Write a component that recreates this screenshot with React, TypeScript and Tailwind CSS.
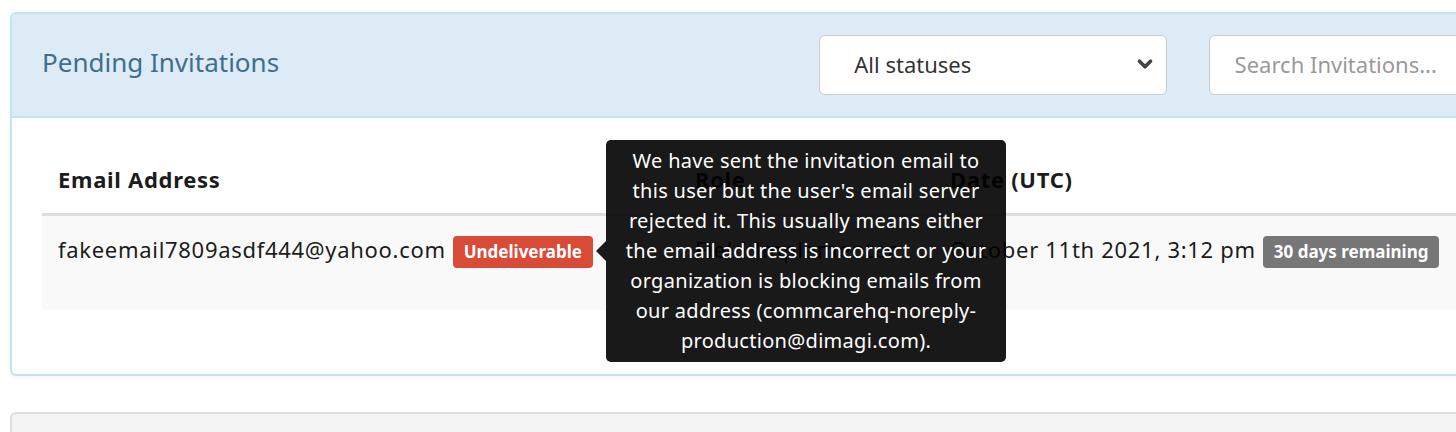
import { ChevronDown } from "lucide-react";

const FONT = { fontFamily: '"Noto Sans", "Open Sans", sans-serif' };

const TIP_LINES = [
  "We have sent the invitation email to",
  "this user but the user's email server",
  "rejected it. This usually means either",
  "the email address is incorrect or your",
  "organization is blocking emails from",
  "our address (commcarehq-noreply-",
  "production@dimagi.com).",
];

function Tooltip() {
  return (
    <div className="absolute left-[554px] top-[-76px] z-10 flex items-center">
      <div className="h-0 w-0 border-y-[10px] border-r-[10px] border-y-transparent border-r-black/90" />
      <div className="w-[400px] rounded-[5px] bg-black/90 py-[6px] text-center text-[20px] font-normal leading-[30px] tracking-[0.3px] text-white">
        {TIP_LINES.map((l) => (
          <div key={l} className="whitespace-nowrap">
            {l}
          </div>
        ))}
      </div>
    </div>
  );
}

export default function App() {
  return (
    <div className="h-[432px] w-[1456px] overflow-hidden bg-white pt-3 pl-[10px]" style={FONT}>
      {/* Pending invitations panel */}
      <div className="w-[1500px] rounded-[6px] border-2 border-[#c3e4ef] bg-white shadow-[0_2px_4px_rgba(0,0,0,0.04)]">
        <div className="flex h-[104px] items-center rounded-t-[4px] border-b-2 border-[#c3e4ef] bg-[#dcebf6] pl-[30px]">
          <h2 className="w-[779px] pb-[6px] text-[26px] font-normal text-[#3f6e8f]">Pending Invitations</h2>
          <div className="flex h-[60px] w-[348px] items-center justify-between rounded-[6px] border border-[#cccccc] bg-white pb-[2px] pl-[34px] pr-[10px] text-[22px] text-[#333]">
            <span>All statuses</span>
            <ChevronDown size={22} strokeWidth={4} className="text-[#444]" />
          </div>
          <div className="ml-[42px] flex h-[60px] w-[300px] items-center rounded-[6px] border border-[#cccccc] bg-white pb-[2px] pl-[25px] text-[22px] text-[#999]">
            Search Invitations...
          </div>
        </div>

        <div className="pl-[30px] pt-[31px] pb-[64px]">
          <table className="w-[1440px] border-collapse text-left text-[22px] tracking-[0.7px] text-[#1c1c1c]">
            <thead>
              <tr className="border-b-[3px] border-[#dddddd]">
                <th className="w-[637px] px-4 pt-[14px] pb-[18px] font-bold leading-8">Email Address</th>
                <th className="w-[255px] px-4 pt-[14px] pb-[18px] font-bold leading-8">Role</th>
                <th className="px-4 pt-[14px] pb-[18px] font-bold leading-8">Date (UTC)</th>
              </tr>
            </thead>
            <tbody>
              <tr className="h-[95px] bg-[#f9f9f9]">
                <td className="relative px-4 pt-[17px] align-top leading-8">
                  <span>fakeemail7809asdf444@yahoo.com</span>
                  <span className="ml-[7px] inline-block rounded-[4px] bg-[#d84b37] px-[11px] align-[0px] text-[17px] font-bold leading-[32px] tracking-normal text-white">
                    Undeliverable
                  </span>
                  <Tooltip />
                </td>
                <td className="px-4 pt-[17px] align-top leading-8">Field Implementer</td>
                <td className="whitespace-nowrap px-4 pt-[17px] align-top leading-8">
                  <span>October 11th 2021, 3:12 pm</span>
                  <span className="ml-[7px] inline-block rounded-[4px] bg-[#777777] px-[11px] align-[0px] text-[17px] font-bold leading-[32px] tracking-normal text-white">
                    30 days remaining
                  </span>
                </td>
              </tr>
            </tbody>
          </table>
        </div>
      </div>

      {/* Next panel, cut off */}
      <div className="mt-[36px] h-[80px] w-[1500px] rounded-[6px] border-2 border-[#dddddd] bg-[#f4f4f4]" />
    </div>
  );
}
